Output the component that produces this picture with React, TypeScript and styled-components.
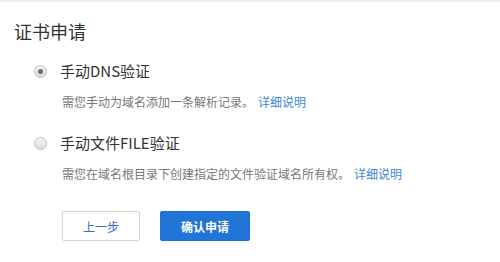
import React from 'react';
import styled, { createGlobalStyle } from 'styled-components';

const GlobalStyle = createGlobalStyle`
  html, body {
    margin: 0;
    padding: 0;
    background: #fff;
  }
  body {
    font-family: "Microsoft YaHei", "Noto Sans CJK SC", "Noto Sans", sans-serif;
  }
`;

const Page = styled.div`
  width: 500px;
  height: 262px;
  box-sizing: border-box;
  border-top: 2px solid #ececec;
  padding-top: 18px;
  display: flex;
  flex-direction: column;
`;

const Title = styled.h2`
  margin: 0 0 19px 14px;
  font-size: 18px;
  line-height: 22px;
  font-weight: normal;
  color: #333;
`;

const OptionList = styled.div`
  display: flex;
  flex-direction: column;
  gap: 22px;
  padding-left: 34px;
`;

const Option = styled.div`
  display: flex;
  flex-direction: column;
  gap: 12px;
`;

const OptionHead = styled.label`
  display: flex;
  align-items: center;
  gap: 13px;
  cursor: pointer;
`;

const Radio = styled.span<{ $checked?: boolean }>`
  width: 13px;
  height: 13px;
  box-sizing: border-box;
  border-radius: 50%;
  border: 1px solid #bdbdbd;
  background: linear-gradient(#f4f4f4, #dcdcdc);
  display: flex;
  align-items: center;
  justify-content: center;

  &::after {
    content: '';
    width: 5px;
    height: 5px;
    border-radius: 50%;
    background: #6d6d6d;
    display: ${(p) => (p.$checked ? 'block' : 'none')};
  }
`;

const OptionLabel = styled.span`
  font-size: 15px;
  line-height: 20px;
  color: #333;
`;

const Desc = styled.p`
  margin: 0 0 0 28px;
  font-size: 12px;
  line-height: 18px;
  color: #777;
  white-space: nowrap;
`;

const Link = styled.a`
  margin-left: 4px;
  color: #3a84d6;
  text-decoration: none;
  cursor: pointer;
`;

const Actions = styled.div`
  display: flex;
  gap: 20px;
  margin: 28px 0 0 62px;
`;

const Button = styled.button<{ $primary?: boolean }>`
  height: 30px;
  width: ${(p) => (p.$primary ? '90px' : '78px')};
  box-sizing: border-box;
  border-radius: 2px;
  border: 1px solid ${(p) => (p.$primary ? '#1f72d0' : '#d4d4d4')};
  background: ${(p) => (p.$primary ? '#2175d6' : '#fff')};
  color: ${(p) => (p.$primary ? '#fff' : '#2f72c4')};
  font-family: inherit;
  font-size: 12px;
  font-weight: ${(p) => (p.$primary ? 'bold' : 'normal')};
  padding: 0;
  cursor: pointer;
`;

const options = [
  {
    label: '手动DNS验证',
    desc: '需您手动为域名添加一条解析记录。',
    checked: true,
  },
  {
    label: '手动文件FILE验证',
    desc: '需您在域名根目录下创建指定的文件验证域名所有权。',
    checked: false,
  },
];

export default function App() {
  return (
    <>
      <GlobalStyle />
      <Page>
        <Title>证书申请</Title>
        <OptionList>
          {options.map((o) => (
            <Option key={o.label}>
              <OptionHead>
                <Radio $checked={o.checked} />
                <OptionLabel>{o.label}</OptionLabel>
              </OptionHead>
              <Desc>
                {o.desc}
                <Link>详细说明</Link>
              </Desc>
            </Option>
          ))}
        </OptionList>
        <Actions>
          <Button>上一步</Button>
          <Button $primary>确认申请</Button>
        </Actions>
      </Page>
    </>
  );
}
